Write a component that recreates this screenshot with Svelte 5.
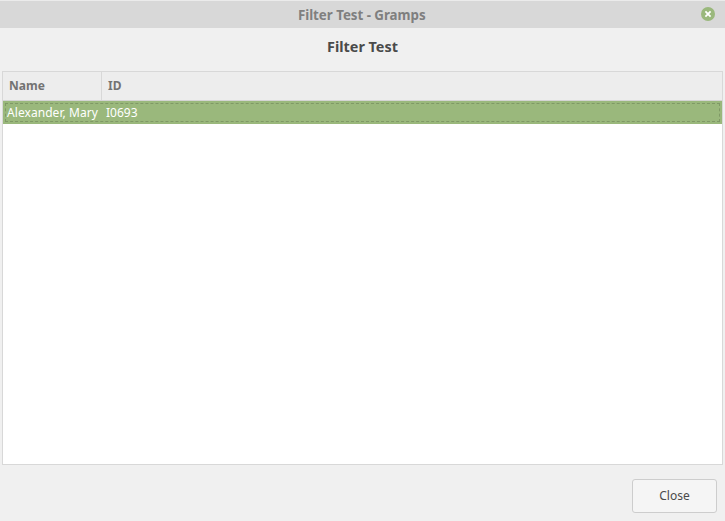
<script>
  const rows = [{ name: 'Alexander, Mary', id: 'I0693' }];
</script>

<div class="window">
  <header class="titlebar">
    <span class="title">Filter Test - Gramps</span>
    <button class="x" aria-label="Close window">
      <svg width="14" height="14" viewBox="0 0 14 14"><circle cx="7" cy="7" r="7" fill="#9ab87c" /><path d="M4.4 4.4l5.2 5.2M9.6 4.4l-5.2 5.2" stroke="#fff" stroke-width="1.8" /></svg>
    </button>
  </header>
  <h1>Filter Test</h1>
  <div class="table">
    <div class="head"><span class="c1">Name</span><span class="c2">ID</span></div>
    {#each rows as r}
      <div class="row"><span class="n">{r.name}</span><span>{r.id}</span></div>
    {/each}
  </div>
  <footer><button class="close">Close</button></footer>
</div>

<style>
  :global(body) { margin: 0; background: #f0f0f0; }
  .window { width: 725px; height: 521px; box-sizing: border-box; display: flex; flex-direction: column; background: #f0f0f0; font: 12px/16px "Noto Sans", sans-serif; color: #4a4a4a; overflow: hidden; }
  .titlebar { height: 28px; flex: none; background: #d8d8d8; display: grid; grid-template-columns: 1fr auto 1fr; align-items: center; box-sizing: border-box; border-top: 1px solid #ebebeb; }
  .title { grid-column: 2; padding-right: 1.5px; font-weight: 700; font-size: 13.33px; letter-spacing: -0.03px; color: #7f7f7f; line-height: 18px; }
  .x { justify-self: end; border: 0; padding: 0 0 1px; margin-right: 10px; background: none; display: flex; }
  h1 { margin: 0; height: 43px; flex: none; font-size: 14.4px; line-height: 38px; text-align: center; }
  .table { margin: 0 2px; flex: 1; background: #fff; border: 1px solid #d8d8d8; }
  .head { height: 28px; display: flex; align-items: stretch; background: #ededed; border-bottom: 1px solid #d4d4d4; font-weight: 700; color: #737373; line-height: 28px; }
  .c1 { width: 98px; box-sizing: content-box; border-right: 1px solid #d8d8d8; text-indent: 6px; }
  .c2 { padding-left: 6px; }
  .row { position: relative; height: 23px; background: #9ab87c; color: #fff; display: flex; line-height: 23px; }
  .row::after { content: ""; position: absolute; inset: 2px; border: 1px dashed #7f9966; }
  .n { width: 103px; text-indent: 4px; letter-spacing: 0.06px; }
  footer { height: 56px; flex: none; display: flex; justify-content: flex-end; align-items: flex-start; padding: 14px 8px 0 0; box-sizing: border-box; }
  .close { width: 85px; height: 34px; border: 1px solid #cdcdcd; border-radius: 3px; background: #f5f5f5; color: #4a4a4a; font: inherit; }
</style>
